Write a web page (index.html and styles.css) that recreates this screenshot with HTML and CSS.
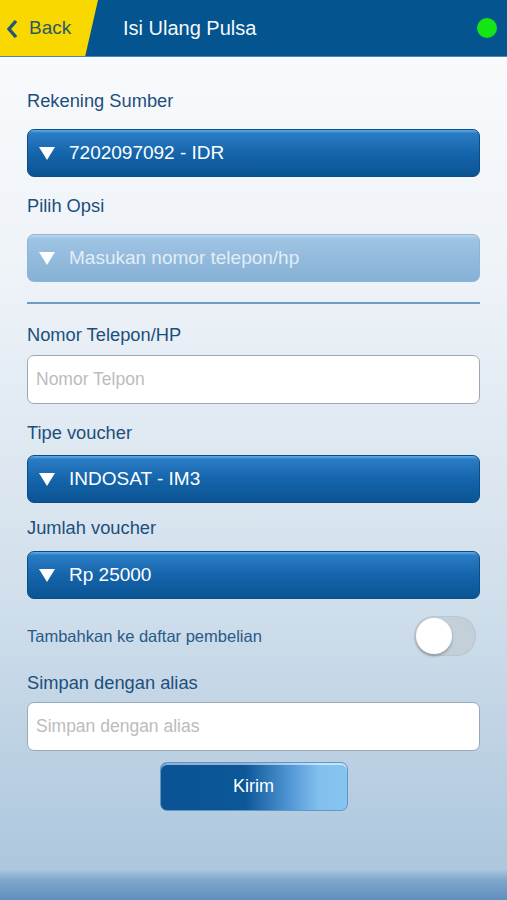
FILE: index.html
```html
<!DOCTYPE html>
<html lang="id">
<head>
  <meta charset="UTF-8">
  <meta name="viewport" content="width=device-width, initial-scale=1.0">
  <title>Isi Ulang Pulsa</title>
  <link rel="stylesheet" href="styles.css">
</head>
<body>
  <header class="topbar">
    <div class="back">
      <svg class="back-icon" width="12" height="18" viewBox="0 0 12 18"><path d="M9 1 L2 9 L9 17" fill="none" stroke="#1f5873" stroke-width="3.4" stroke-linejoin="miter"/></svg>
      <span>Back</span>
    </div>
    <h1 class="title">Isi Ulang Pulsa</h1>
    <span class="status-dot"></span>
  </header>

  <main class="form">
    <label class="label first">Rekening Sumber</label>
    <div class="dropdown">
      <svg class="tri" width="16" height="13" viewBox="0 0 16 13"><path d="M0 0 H16 L8 13 Z" fill="#fff"/></svg>
      <span>7202097092 - IDR</span>
    </div>

    <label class="label">Pilih Opsi</label>
    <div class="dropdown disabled">
      <svg class="tri" width="16" height="13" viewBox="0 0 16 13"><path d="M0 0 H16 L8 13 Z" fill="#fff"/></svg>
      <span>Masukan nomor telepon/hp</span>
    </div>

    <hr class="divider">

    <label class="label tight">Nomor Telepon/HP</label>
    <input class="text-input" type="text" placeholder="Nomor Telpon">

    <label class="label voucher-type">Tipe voucher</label>
    <div class="dropdown">
      <svg class="tri" width="16" height="13" viewBox="0 0 16 13"><path d="M0 0 H16 L8 13 Z" fill="#fff"/></svg>
      <span>INDOSAT - IM3</span>
    </div>

    <label class="label voucher-amount">Jumlah voucher</label>
    <div class="dropdown">
      <svg class="tri" width="16" height="13" viewBox="0 0 16 13"><path d="M0 0 H16 L8 13 Z" fill="#fff"/></svg>
      <span>Rp 25000</span>
    </div>

    <div class="toggle-row">
      <span class="toggle-label">Tambahkan ke daftar pembelian</span>
      <div class="toggle"><span class="knob"></span></div>
    </div>

    <label class="label alias">Simpan dengan alias</label>
    <input class="text-input" type="text" placeholder="Simpan dengan alias">

    <button class="submit">Kirim</button>
  </main>

  <footer class="bottom-band"></footer>
</body>
</html>
```

FILE: styles.css
```css
body {
  margin: 0;
  height: 900px;
  display: flex;
  flex-direction: column;
  font-family: "Liberation Sans", Arial, sans-serif;
  background: linear-gradient(#fbfcfd 0%, #eef3f8 30%, #d2e0ec 65%, #a9c4dc 100%);
  overflow: hidden;
}

.topbar {
  height: 57px;
  flex-shrink: 0;
  display: flex;
  align-items: center;
  background-color: #03548f;
  border-bottom: 1px solid #4d86b8;
  box-sizing: border-box;
}

.back {
  height: 100%;
  width: 98px;
  display: flex;
  align-items: center;
  gap: 10px;
  padding-left: 7px;
  box-sizing: border-box;
  background-color: #f9d800;
  clip-path: polygon(0 0, 100% 0, 87% 100%, 0 100%);
  color: #2b5a6c;
  font-size: 19px;
}

.back-icon {
  margin-top: 1px;
}

.title {
  margin: 0 0 0 25px;
  flex: 1;
  color: #f4f8fc;
  font-size: 20px;
  font-weight: normal;
}

.status-dot {
  width: 20px;
  height: 20px;
  margin-right: 10px;
  border-radius: 50%;
  background-color: #14e614;
}

.form {
  flex: 1;
  display: flex;
  flex-direction: column;
  padding: 0 27px;
}

.label {
  display: block;
  color: #1d4f7c;
  font-size: 18.3px;
  line-height: 22px;
  margin: 18px 0 17px;
}

.label.first {
  margin-top: 33px;
}

.label.tight {
  margin: 20px 0 9px;
}

.label.voucher-type {
  margin: 18px 0 11px;
}

.label.voucher-amount {
  margin: 14px 0 12px;
}

.label.alias {
  margin: 16px 0 8px;
}

.dropdown {
  height: 48px;
  display: flex;
  align-items: center;
  gap: 14px;
  padding-left: 11px;
  box-sizing: border-box;
  border: 1px solid #0c4d86;
  border-radius: 7px;
  background: linear-gradient(#66aee8 0%, #2a7cc5 7%, #1565ab 50%, #0a5493 100%);
  color: #ffffff;
  font-size: 19px;
}

.dropdown.disabled {
  border-color: #8eb4d6;
  background: linear-gradient(#bcd8ee 0%, #9fc4e4 8%, #93bbdd 50%, #86b0d5 100%);
  color: #e2edf7;
}

.tri {
  flex-shrink: 0;
}

.divider {
  margin: 20px 0 0;
  border: none;
  height: 2px;
  background-color: #6d9cc4;
}

.text-input {
  height: 49px;
  padding: 0 8px;
  box-sizing: border-box;
  border: 1px solid #9aa8b6;
  border-radius: 7px;
  background: #ffffff;
  font-family: "Liberation Sans", Arial, sans-serif;
  font-size: 17.5px;
  color: #333;
}

.text-input::placeholder {
  color: #bcbcbc;
}

.toggle-row {
  display: flex;
  align-items: center;
  justify-content: space-between;
  margin-top: 17px;
}

.toggle-label {
  color: #285a88;
  font-size: 16.5px;
}

.toggle {
  width: 62px;
  height: 40px;
  margin-right: 4px;
  border-radius: 20px;
  background-color: #c3cfd9;
  box-shadow: inset 0 0 0 1px #b8c6d2;
  display: flex;
  align-items: center;
  padding: 2px;
  box-sizing: border-box;
}

.knob {
  width: 36px;
  height: 36px;
  border-radius: 50%;
  background: #ffffff;
  box-shadow: 0 2px 3px rgba(0, 0, 0, 0.25);
}

.submit {
  align-self: center;
  width: 188px;
  height: 49px;
  margin-top: 11px;
  border: 1px solid #5f97c8;
  border-radius: 7px;
  background: linear-gradient(90deg, #0a5394 0%, #0c5798 45%, #4e93d2 68%, #82c1ef 85%, #86c4f0 100%);
  box-shadow: inset 0 2px 0 rgba(255, 255, 255, 0.55);
  color: #ffffff;
  font-family: "Liberation Sans", Arial, sans-serif;
  font-size: 18px;
  cursor: pointer;
}

.bottom-band {
  height: 30px;
  flex-shrink: 0;
  background: linear-gradient(#a9c4dc 0%, #7ea6cb 35%, #5f8fbe 100%);
}
```
